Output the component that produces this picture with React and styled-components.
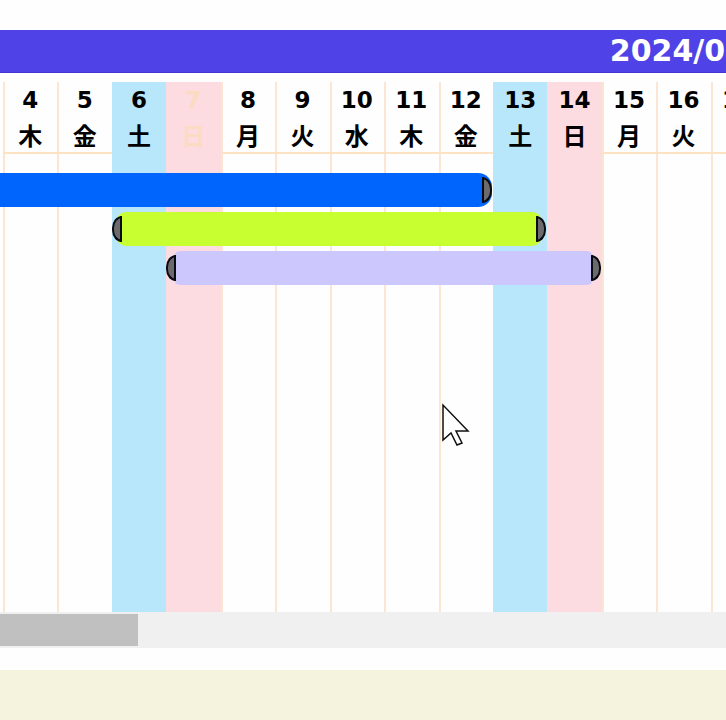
import React from "react";
import styled, { createGlobalStyle } from "styled-components";

const GlobalStyle = createGlobalStyle`
  *, *::before, *::after { box-sizing: border-box; }
  html { height: 100%; overflow: hidden; }
  body {
    margin: 0;
    min-height: 100%;
    background: #f5f2dd;
    color: #000;
    font-family: "DejaVu Sans", "Noto Sans CJK JP", sans-serif;
    overflow: hidden;
  }
`;

const Panel = styled.main`
  position: relative;
  padding: 30px 0 22px;
  background: #fefefe;
  overflow: hidden;
`;

const MonthBar = styled.header`
  height: 43px;
  margin-bottom: 9px;
  padding-left: 84%;
  background: #4f42e7;
  border-bottom: 1px solid #4334d4;
  overflow: hidden;
`;

const MonthTitle = styled.h1`
  margin: 0;
  color: #fff;
  font-size: 30px;
  line-height: 42px;
  font-weight: 700;
  white-space: nowrap;
`;

const Chart = styled.section`
  display: grid;
  grid-template-columns: 3px repeat(14, 7.5%);
  grid-template-rows: 71px 20px repeat(3, 34px 5px) 322px;
  overflow: hidden;
`;

const dayColors = { sat: "#b8e6fb", sun: "#fcdbe1", weekday: "transparent" };

const DayColumn = styled.div`
  grid-column: ${({ $index }) => $index + 2};
  grid-row: 1 / -1;
  background: ${({ $kind }) => dayColors[$kind]};
  box-shadow: ${({ $kind }) => ($kind === "weekday" ? "inset 2px 0 #fbe5d3" : "none")};
`;

const DayHead = styled.div`
  height: 72px;
  color: ${({ $faded }) => ($faded ? "#fbdcc0" : "#000")};
  border-bottom: ${({ $kind }) => ($kind === "weekday" ? "2px solid #fde3c4" : "0")};
  font-size: 23px;
  line-height: 35px;
  font-weight: 700;
  text-align: center;
`;

const DateNumber = styled.div`
  padding-top: 1px;
`;

const Weekday = styled.div`
  font-family: "Noto Sans CJK JP", sans-serif;
  font-size: 24px;
  line-height: 34px;
`;

const TaskBar = styled.div`
  grid-column: ${({ $from, $to }) => `${$from} / ${$to}`};
  grid-row: ${({ $row }) => $row};
  z-index: 1;
  display: flex;
  align-items: center;
  margin-right: 1px;
`;

const BarFill = styled.div`
  flex: 1;
  height: 100%;
  margin-left: ${({ $open, $overlap }) => ($open ? 0 : -$overlap)}px;
  margin-right: ${({ $overlap }) => -$overlap}px;
  background: ${({ $color }) => $color};
  border-radius: ${({ $open, $radius }) =>
    $open ? `0 ${$radius}px ${$radius}px 0` : `${$radius}px`};
`;

const Handle = styled.button`
  position: relative;
  z-index: 1;
  flex: none;
  width: 10px;
  height: 26px;
  padding: 0;
  background: #6c6a6c;
  border: 2px solid #090b12;
  border-radius: ${({ $side }) =>
    $side === "left" ? "10px 0 0 10px / 12px 0 0 12px" : "0 10px 10px 0 / 0 12px 12px 0"};
  cursor: ew-resize;
`;

const ScrollTrack = styled.div`
  height: 36px;
  padding: 2px 0;
  background: #f0f0f0;
`;

const ScrollThumb = styled.div`
  width: 19%;
  height: 32px;
  background: #c0c0c0;
`;

const Cursor = styled.svg`
  position: absolute;
  left: 441px;
  top: 403px;
  z-index: 2;
`;

const weekdays = ["日", "月", "火", "水", "木", "金", "土"];
const days = Array.from({ length: 14 }, (_, i) => {
  const weekday = (i + 4) % 7;
  return {
    date: i + 4,
    name: weekdays[weekday],
    kind: weekday === 0 ? "sun" : weekday === 6 ? "sat" : "weekday",
  };
});

const tasks = [
  { id: "a", from: 1, to: 11, row: 3, color: "#0065fd", open: true, overlap: 10, radius: 14 },
  { id: "b", from: 4, to: 12, row: 5, color: "#c7ff31", overlap: 6, radius: 10 },
  { id: "c", from: 5, to: 13, row: 7, color: "#ccc8fd", overlap: 2, radius: 6 },
];

export default function App() {
  return (
    <>
      <GlobalStyle />
      <Panel>
        <MonthBar>
          <MonthTitle>2024/04</MonthTitle>
        </MonthBar>
        <Chart>
          {days.map((day, index) => (
            <DayColumn key={day.date} $index={index} $kind={day.kind}>
              <DayHead $kind={day.kind} $faded={day.date === 7}>
                <DateNumber>{day.date}</DateNumber>
                <Weekday>{day.name}</Weekday>
              </DayHead>
            </DayColumn>
          ))}
          {tasks.map((task) => (
            <TaskBar key={task.id} $from={task.from} $to={task.to} $row={task.row}>
              {!task.open && <Handle type="button" $side="left" aria-label="開始日を変更" />}
              <BarFill
                $color={task.color}
                $open={task.open}
                $overlap={task.overlap}
                $radius={task.radius}
              />
              <Handle type="button" $side="right" aria-label="終了日を変更" />
            </TaskBar>
          ))}
        </Chart>
        <ScrollTrack>
          <ScrollThumb />
        </ScrollTrack>
        <Cursor width="30" height="46" viewBox="0 0 30 46" aria-hidden="true">
          <path
            d="M2 2V37L10 30L16 42L21 40L15 28H27Z"
            fill="#fff"
            stroke="#111"
            strokeWidth="1.5"
          />
        </Cursor>
      </Panel>
    </>
  );
}
